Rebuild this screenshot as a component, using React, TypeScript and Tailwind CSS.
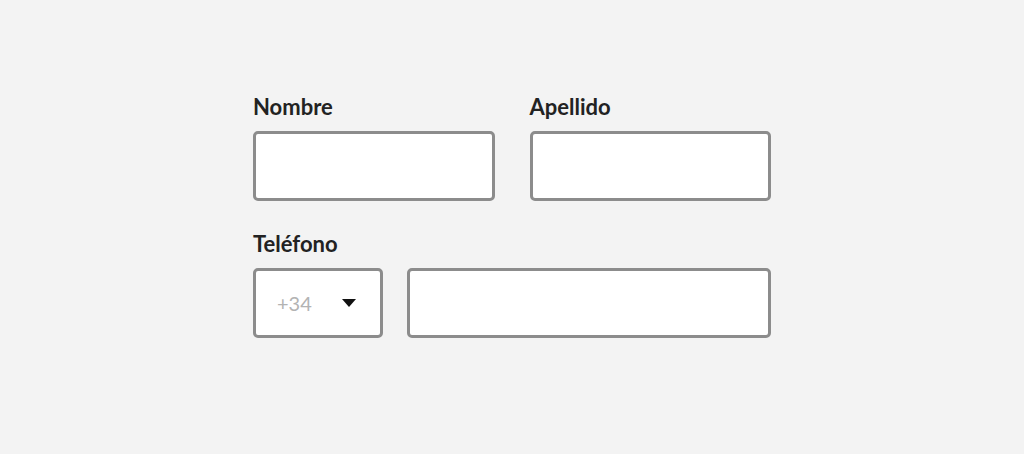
export default function App() {
  return (
    <div className="min-h-[454px] w-full bg-[#f3f3f3] font-['Lato',sans-serif]">
      <div className="ml-[253px] w-[518px] pt-[95px]">
        {/* Nombre / Apellido */}
        <div className="grid grid-cols-2 gap-x-[35px]">
          <div>
            <label className="block text-[22px] font-bold leading-[24px] text-[#222]">Nombre</label>
            <div className="mt-[12px] h-[70px] rounded-[5px] border-[3px] border-[#8c8c8c] bg-white"></div>
          </div>
          <div>
            <label className="block text-[22px] font-bold leading-[24px] text-[#222]">Apellido</label>
            <div className="mt-[12px] h-[70px] rounded-[5px] border-[3px] border-[#8c8c8c] bg-white"></div>
          </div>
        </div>

        {/* Teléfono */}
        <div className="mt-[31px]">
          <label className="block text-[22px] font-bold leading-[24px] text-[#222]">Teléfono</label>
          <div className="mt-[12px] flex gap-[24px]">
            <div className="flex h-[70px] w-[130px] items-center justify-between rounded-[5px] border-[3px] border-[#8c8c8c] bg-white pl-[21px] pr-[24px]">
              <span className="text-[20px] text-[#b3b3b3]">+34</span>
              <svg width="14" height="8" viewBox="0 0 14 8">
                <path d="M0 0h14L7 8z" fill="#111" />
              </svg>
            </div>
            <div className="h-[70px] flex-1 rounded-[5px] border-[3px] border-[#8c8c8c] bg-white"></div>
          </div>
        </div>
      </div>
    </div>
  );
}
